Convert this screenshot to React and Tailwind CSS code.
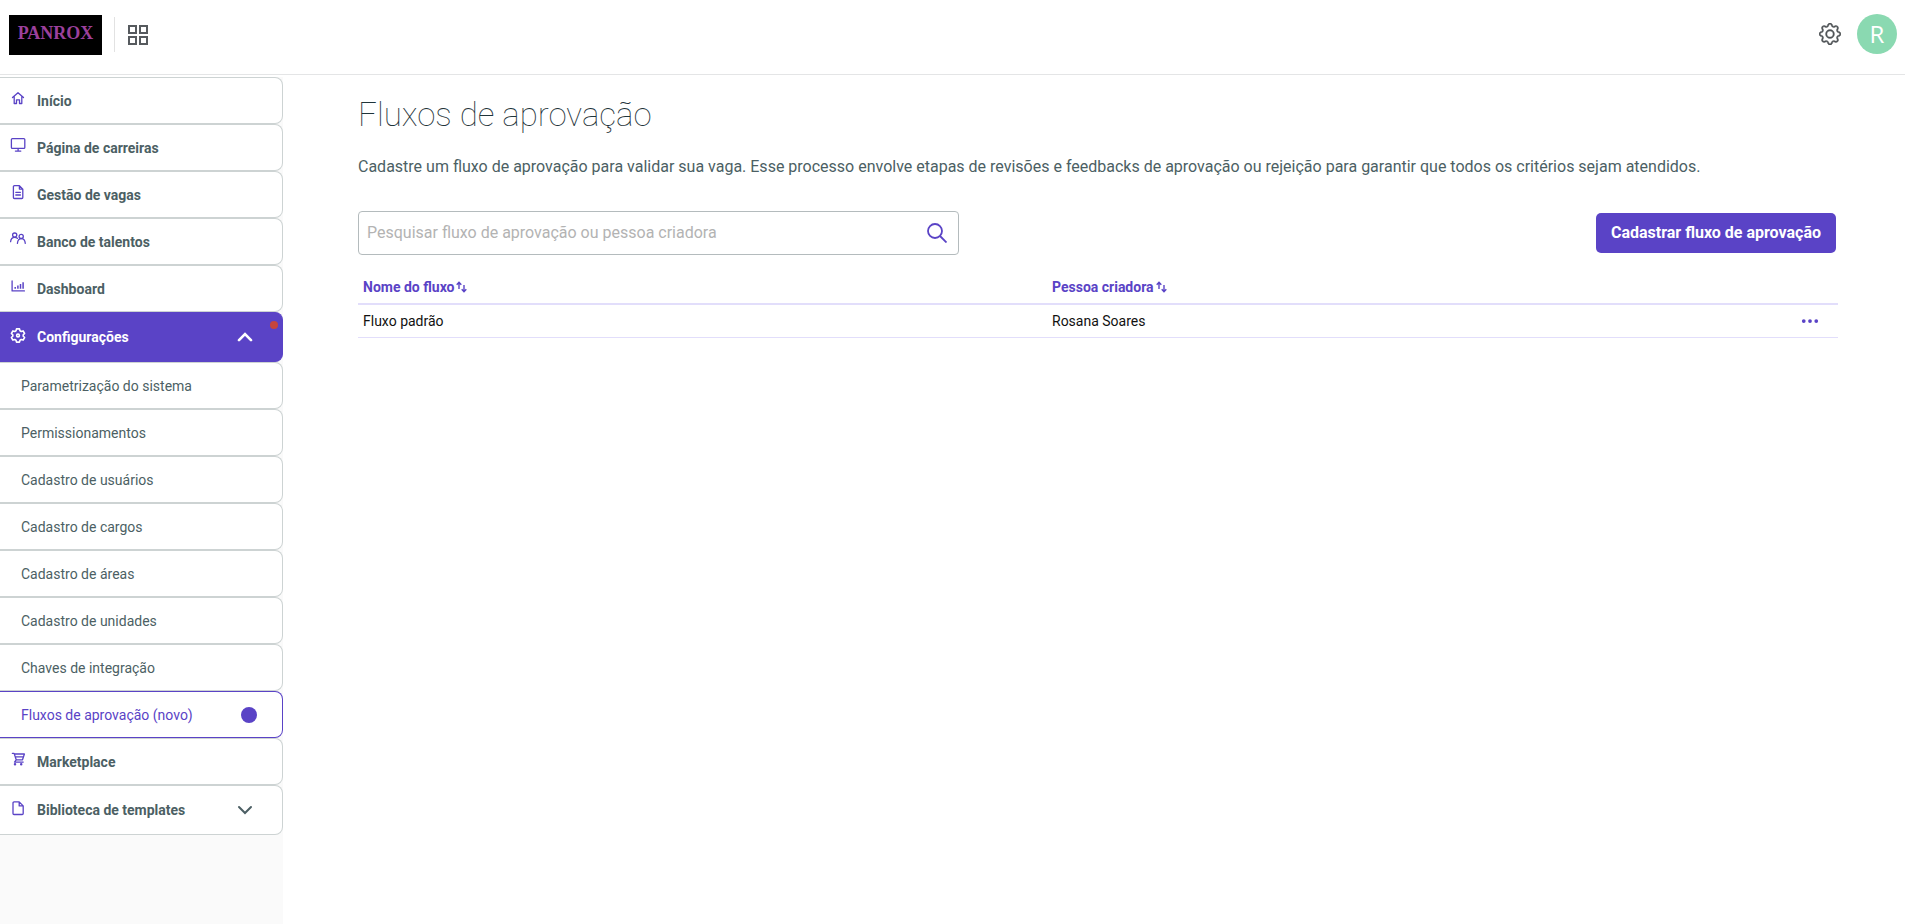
import { BsGear, BsThreeDots } from "react-icons/bs";

function Icon({ children, className = "size-4" }) {
  return (
    <svg
      viewBox="0 0 16 16"
      className={className}
      fill="none"
      stroke="currentColor"
      strokeWidth="1.3"
      strokeLinecap="round"
      strokeLinejoin="round"
      aria-hidden="true"
    >
      {children}
    </svg>
  );
}

const icons = {
  home: (
    <Icon>
      <path d="M2.5 7.6 8 2.700l5.500 4.900M4.200 6.600v6.900h2.300V9.800h3v3.700h2.300V6.600" />
    </Icon>
  ),
  monitor: (
    <Icon>
      <rect x="1.4" y="1.6" width="13.4" height="9.8" rx="1" />
      <path d="M8.1 11.6v2.3M5.4 14.1h5.4" />
    </Icon>
  ),
  document: (
    <Icon>
      <path d="M9.4 1.7H4.4a1 1 0 0 0-1 1v10.8a1 1 0 0 0 1 1h7.4a1 1 0 0 0 1-1V5.1L9.4 1.7v3.4h3.4" />
      <path d="M5.8 8.3h4.6M5.8 11h4.6" />
    </Icon>
  ),
  people: (
    <Icon className="size-4 overflow-visible">
      <circle cx="4.7" cy="4.1" r="2.1" />
      <circle cx="11.2" cy="5.4" r="2.1" />
      <path d="M.6 10.7c.2-2.7 1.7-4.4 4.1-4.4 1.2 0 2 .4 2.7 1M7.4 12.4c.3-2.8 1.6-4.8 3.9-4.8s3.7 1.9 4 4.8" />
    </Icon>
  ),
  chart: (
    <Icon>
      <path d="M2.100 2.900v10h12.300" />
      <path d="M5.2 10.8V8.900M7.900 10.800V7.400M10.500 10.800V6M13.100 10.800V4.300" strokeLinecap="butt" strokeWidth="1.5" />
    </Icon>
  ),
  cog: (
    <Icon>
      <path
        strokeWidth="1.6"
        d="M6.500 1.900h3l.5 1.900 1.200.7 1.900-.6 1.500 2.600-1.400 1.300v1.400l1.400 1.300-1.500 2.600-1.900-.6-1.200.7-.5 1.900h-3L6 13.200l-1.200-.7-1.900.6-1.500-2.600 1.400-1.300V7.800L1.400 6.500l1.500-2.600 1.900.6L6 3.800z"
      />
      <circle cx="8" cy="8.5" r="1.4" strokeWidth="1.6" />
    </Icon>
  ),
  cart: (
    <Icon>
      <path d="M2.400 2.400h1.700l2.100 6.400h6.300L14.400 3H4.300M5.200 5.800h8.200M6.200 8.800l-1.700 2.300h8.700" />
      <circle cx="5" cy="13.300" r=".6" />
      <circle cx="11.200" cy="13.300" r=".6" />
    </Icon>
  ),
  file: (
    <Icon>
      <path d="M9.2 1.9H4a1 1 0 0 0-1 1v10.6a1 1 0 0 0 1 1h8.2a1 1 0 0 0 1-1V5.9L9.200 1.900v4h4" />
    </Icon>
  ),
};

const mainItems = [
  { label: "Início", icon: "home" },
  { label: "Página de carreiras", icon: "monitor" },
  { label: "Gestão de vagas", icon: "document" },
  { label: "Banco de talentos", icon: "people" },
  { label: "Dashboard", icon: "chart" },
];

const settingsItems = [
  "Parametrização do sistema",
  "Permissionamentos",
  "Cadastro de usuários",
  "Cadastro de cargos",
  "Cadastro de áreas",
  "Cadastro de unidades",
  "Chaves de integração",
];

function Chevron({ up }) {
  return (
    <svg viewBox="0 0 16 10" className="h-[10px] w-4" fill="none" stroke="currentColor" strokeWidth={up ? 2.6 : 2} strokeLinecap="round" aria-hidden="true">
      <path d={up ? "M2 8.200 8 2.200l6 6" : "M2 2 8 8l6-6"} />
    </svg>
  );
}

function NavLabel({ icon, children }) {
  return (
    <>
      <span className="pb-[5px]">{icons[icon]}</span>
      <span className="text-[#4c5f64] group-data-[open=true]:text-white">{children}</span>
    </>
  );
}

const row = "flex w-full items-center rounded-r-lg border border-l-0 text-left text-sm";

function NavLink({ icon, label }) {
  return (
    <li>
      <a href="#" className={`${row} h-[47px] gap-[11px] border-[#cdd3d3] bg-white pl-[10px] font-bold text-[#5a43c6]`}>
        <NavLabel icon={icon}>{label}</NavLabel>
      </a>
    </li>
  );
}

function SortHeader({ children, className }) {
  return (
    <th scope="col" className={`px-[5px] pt-1 pb-1 text-left font-bold ${className}`}>
      <button type="button" className="flex items-center gap-[2px] text-sm leading-6 text-[#5a43c6]">
        {children}
        <svg viewBox="0 0 11 12" className="h-3 w-[11px]" fill="none" stroke="currentColor" strokeWidth="1.4" aria-hidden="true">
          <path d="M3 8V1.500M.7 3.700 3 1.300l2.300 2.400M8 4v6.500M5.700 8.300 8 10.700l2.300-2.400" />
        </svg>
      </button>
    </th>
  );
}

export default function App() {
  return (
    <div className="flex min-h-screen flex-col bg-white font-['Roboto','Noto_Sans',sans-serif]">
      <header className="flex h-[75px] items-start justify-between border-b border-[#e4e5e6] pt-[14px] pr-2 pl-[9px]">
        <div className="flex h-[41px] items-center">
          <a href="#" className="flex h-10 w-[93px] items-center justify-center bg-black pb-1 font-['Liberation_Serif',serif] text-lg leading-6 font-bold text-[#9c409c]">
            PANROX
          </a>
          <span className="ml-3 h-[35px] w-px bg-[#e2e2e2]" />
          <button type="button" aria-label="Aplicativos" className="ml-[13px] text-[#565a5e]">
            <svg viewBox="0 0 20 20" className="size-5" fill="none" stroke="currentColor" strokeWidth="2" aria-hidden="true">
              <path d="M1 1h7v7H1zM12 1h7v7h-7zM1 12h7v7H1zM12 12h7v7h-7z" />
            </svg>
          </button>
        </div>
        <div className="flex items-center gap-4">
          <button type="button" aria-label="Configurações" className="text-[#4f5357]">
            <BsGear className="size-[22px]" strokeWidth="0.3" />
          </button>
          <button type="button" className="flex size-10 items-center justify-center rounded-full bg-[#8ad9b1] font-['Open_Sans',sans-serif] text-2xl text-white">
            R
          </button>
        </div>
      </header>

      <div className="flex flex-1">
        <nav className="w-[283px] shrink-0 bg-[#fafafa]">
          <ul className="border-t-2 border-white">
            {mainItems.map((item) => (
              <NavLink key={item.label} {...item} />
            ))}
            <li>
              <button
                type="button"
                data-open="true"
                aria-expanded="true"
                className={`${row} group relative h-[50px] gap-[11px] border-[#5a43c6] bg-[#5a43c6] pr-[29px] pl-[10px] font-bold text-white`}
              >
                <NavLabel icon="cog">Configurações</NavLabel>
                <span className="ml-auto">
                  <Chevron up />
                </span>
                <span className="absolute top-2 right-1 size-2 rounded-full bg-[#c6453f]" />
              </button>
              <ul>
                {settingsItems.map((label) => (
                  <li key={label}>
                    <a href="#" className={`${row} h-[47px] border-[#cdd3d3] bg-white pl-[21px] text-[#4c5f64]`}>
                      {label}
                    </a>
                  </li>
                ))}
                <li>
                  <a href="#" aria-current="page" className={`${row} h-[47px] justify-between border-[#5a43c6] bg-white pr-[25px] pl-[21px] text-[#5a43c6]`}>
                    Fluxos de aprovação (novo)
                    <span className="size-4 rounded-full bg-[#5a43c6]" />
                  </a>
                </li>
              </ul>
            </li>
            <NavLink icon="cart" label="Marketplace" />
            <li>
              <button
                type="button"
                aria-expanded="false"
                className={`${row} h-[50px] gap-[11px] border-[#cdd3d3] bg-white pr-[29px] pl-[10px] font-bold text-[#5a43c6]`}
              >
                <NavLabel icon="file">Biblioteca de templates</NavLabel>
                <span className="ml-auto text-[#4c5f64]">
                  <Chevron />
                </span>
              </button>
            </li>
          </ul>
        </nav>

        <main className="min-w-0 flex-1 pt-5 pr-[67px] pl-[75px]">
          <h1 className="text-[33px] leading-10 font-thin text-[#1f343a]">Fluxos de aprovação</h1>
          <p className="mt-5 text-base leading-6 text-[#4c5f64]">
            Cadastre um fluxo de aprovação para validar sua vaga. Esse processo envolve etapas de revisões e feedbacks de aprovação ou rejeição para garantir que todos os critérios sejam atendidos.
          </p>

          <div className="mt-8 flex items-center justify-between gap-6 pr-[2px]">
            <form role="search" className="flex h-11 w-[601px] items-center rounded border border-[#b4bbbd] pr-[11px] pl-2">
              <input
                type="text"
                aria-label="Pesquisar fluxo de aprovação ou pessoa criadora"
                placeholder="Pesquisar fluxo de aprovação ou pessoa criadora"
                className="min-w-0 flex-1 text-base outline-none placeholder:text-[#b3b3b3]"
              />
              <button type="button" aria-label="Pesquisar" className="text-[#5a43c6]">
                <svg viewBox="0 0 20 20" className="size-5" fill="none" stroke="currentColor" strokeWidth="1.8" aria-hidden="true">
                  <circle cx="8" cy="8" r="7" />
                  <path d="m13 13 6.500 6.500" />
                </svg>
              </button>
            </form>
            <button type="button" className="flex h-10 items-center rounded-[5px] bg-[#5a43c6] px-[15px] text-base font-bold text-white">
              Cadastrar fluxo de aprovação
            </button>
          </div>

          <table className="mt-4 w-full table-fixed border-collapse text-sm">
            <thead>
              <tr className="border-b-2 border-[#e2defb]">
                <SortHeader className="w-[689px]">Nome do fluxo</SortHeader>
                <SortHeader className="">Pessoa criadora</SortHeader>
                <td className="w-20" />
              </tr>
            </thead>
            <tbody>
              <tr className="h-[33px] border-b border-[#e2defb] text-[#111111]">
                <td className="px-[5px]">Fluxo padrão</td>
                <td className="px-[5px]">Rosana Soares</td>
                <td className="pr-[18px]">
                  <button type="button" aria-label="Mais ações" className="ml-auto block text-[#5a43c6]">
                    <BsThreeDots className="size-5" />
                  </button>
                </td>
              </tr>
            </tbody>
          </table>
        </main>
      </div>
    </div>
  );
}
